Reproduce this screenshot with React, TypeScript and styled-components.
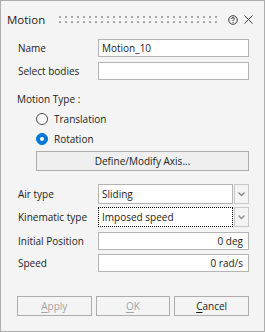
import React from "react";
import styled, { createGlobalStyle, css } from "styled-components";

const Global = createGlobalStyle`
  html, body { margin: 0; padding: 0; background: #f4f4f4; }
  body { font-family: "Open Sans", "Noto Sans", sans-serif; font-size: 10px; color: #1b1b1b; }
  * { box-sizing: border-box; }
`;

const Panel = styled.div`
  width: 265px;
  height: 332px;
  border: 1px solid #adadad;
  background: #f4f4f4;
  display: flex;
  flex-direction: column;
`;

const Header = styled.div`
  height: 37px;
  display: flex;
  align-items: center;
  padding-left: 6px;
  padding-right: 11px;
`;

const Title = styled.div`
  font-size: 11.5px;
  color: #2a2016;
  width: 39px;
`;

const Grip = styled.svg`
  margin-left: 14px;
  flex: none;
`;

const IconBtn = styled.span<{ $ml: number }>`
  display: flex;
  align-items: center;
  justify-content: center;
  width: 10px;
  height: 10px;
  margin-left: ${(p) => p.$ml}px;
  color: #3a3a3a;
`;

const Body = styled.div`
  padding: 0 15px 0 16px;
  display: flex;
  flex-direction: column;
`;

const Row = styled.div<{ $mt: number; $h?: number }>`
  display: flex;
  align-items: center;
  margin-top: ${(p) => p.$mt}px;
  height: ${(p) => p.$h ?? 18}px;
`;

const Label = styled.div`
  width: 81px;
  flex: none;
  padding-left: 1px;
  white-space: nowrap;
`;

const Field = styled.div<{ $right?: boolean; $focus?: boolean }>`
  flex: 1;
  height: 100%;
  background: #fff;
  border: 1px solid #b4b4b4;
  display: flex;
  align-items: center;
  padding: 0 5px 0 3px;
  justify-content: ${(p) => (p.$right ? "flex-end" : "flex-start")};
  ${(p) =>
    p.$focus &&
    css`
      border: 1px dotted #000;
    `}
`;

const SectionLabel = styled.div<{ $mt: number }>`
  margin-top: ${(p) => p.$mt}px;
  height: 14px;
  line-height: 14px;
`;

const RadioRow = styled.div<{ $mt: number }>`
  display: flex;
  align-items: center;
  margin-top: ${(p) => p.$mt}px;
  margin-left: 19px;
  height: 14px;
`;

const RadioCircle = styled.span<{ $on?: boolean }>`
  width: 12px;
  height: 12px;
  border-radius: 50%;
  flex: none;
  margin-right: 6px;
  display: flex;
  align-items: center;
  justify-content: center;
  ${(p) =>
    p.$on
      ? css`
          background: #0078d7;
          border: 1px solid #0078d7;
          &::after {
            content: "";
            width: 4px;
            height: 4px;
            border-radius: 50%;
            background: #fff;
          }
        `
      : css`
          background: #fff;
          border: 1px solid #4a4a4a;
        `}
`;

const WideButton = styled.div`
  margin-top: 5px;
  margin-left: 19px;
  height: 20px;
  border: 1px solid #adadad;
  background: #efefef;
  display: flex;
  align-items: center;
  justify-content: center;
`;

const Combo = styled.div`
  flex: 1;
  height: 100%;
  display: flex;
  gap: 1px;
`;

const DropBtn = styled.div`
  width: 15px;
  flex: none;
  border: 1px solid #c8c8c8;
  background: #f4f4f4;
  display: flex;
  align-items: center;
  justify-content: center;
`;

const Footer = styled.div`
  margin-top: 24px;
  display: grid;
  grid-template-columns: 1fr 1fr 1fr;
  gap: 4px;
`;

const DlgButton = styled.div<{ $disabled?: boolean }>`
  height: 20px;
  border: 1px solid #adadad;
  background: #f4f4f4;
  display: flex;
  align-items: center;
  justify-content: center;
  color: ${(p) => (p.$disabled ? "#a3a3a3" : "#1b1b1b")};
  u { text-decoration-thickness: 1px; text-underline-offset: 2px; }
`;

const Chevron = () => (
  <svg width="7" height="5" viewBox="0 0 7 5">
    <path d="M0.5 0.5 L3.5 3.5 L6.5 0.5" fill="none" stroke="#8a8a8a" strokeWidth="1.3" />
  </svg>
);

export default function App() {
  return (
    <>
      <Global />
      <Panel>
        <Header>
          <Title>Motion</Title>
          <Grip width="158" height="8" viewBox="0 0 158 8">
            <defs>
              <pattern id="dots" width="6" height="5" patternUnits="userSpaceOnUse">
                <rect x="0" y="0" width="2" height="2" fill="#a6a6a6" />
              </pattern>
            </defs>
            <rect x="0" y="0" width="158" height="7" fill="url(#dots)" />
          </Grip>
          <IconBtn $ml={11}>
            <svg width="10" height="10" viewBox="0 0 10 10">
              <circle cx="5" cy="5" r="4.3" fill="none" stroke="#3a3a3a" strokeWidth="1" />
              <path d="M3.6 4 Q3.6 2.6 5 2.6 Q6.4 2.6 6.4 3.8 Q6.4 4.6 5.3 5 L5 5.4 L5 6" fill="none" stroke="#3a3a3a" strokeWidth="1" />
              <rect x="4.5" y="6.8" width="1" height="1" fill="#3a3a3a" />
            </svg>
          </IconBtn>
          <IconBtn $ml={5}>
            <svg width="9" height="9" viewBox="0 0 9 9">
              <path d="M0.5 0.5 L8.5 8.5 M8.5 0.5 L0.5 8.5" stroke="#3a3a3a" strokeWidth="1" />
            </svg>
          </IconBtn>
        </Header>
        <Body>
          <Row $mt={1}>
            <Label>Name</Label>
            <Field>Motion_10</Field>
          </Row>
          <Row $mt={5}>
            <Label>Select bodies</Label>
            <Field />
          </Row>
          <SectionLabel $mt={12}>Motion Type :</SectionLabel>
          <RadioRow $mt={6}>
            <RadioCircle />
            Translation
          </RadioRow>
          <RadioRow $mt={6}>
            <RadioCircle $on />
            Rotation
          </RadioRow>
          <WideButton>Define/Modify Axis...</WideButton>
          <Row $mt={13} $h={20}>
            <Label>Air type</Label>
            <Combo>
              <Field>Sliding</Field>
              <DropBtn>
                <Chevron />
              </DropBtn>
            </Combo>
          </Row>
          <Row $mt={3} $h={20}>
            <Label>Kinematic type</Label>
            <Combo>
              <Field $focus>Imposed speed</Field>
              <DropBtn>
                <Chevron />
              </DropBtn>
            </Combo>
          </Row>
          <Row $mt={5}>
            <Label>Initial Position</Label>
            <Field $right>0 deg</Field>
          </Row>
          <Row $mt={4}>
            <Label>Speed</Label>
            <Field $right>0 rad/s</Field>
          </Row>
          <Footer>
            <DlgButton $disabled>
              <span>
                <u>A</u>pply
              </span>
            </DlgButton>
            <DlgButton $disabled>
              <span>
                <u>O</u>K
              </span>
            </DlgButton>
            <DlgButton>
              <span>
                <u>C</u>ancel
              </span>
            </DlgButton>
          </Footer>
        </Body>
      </Panel>
    </>
  );
}
